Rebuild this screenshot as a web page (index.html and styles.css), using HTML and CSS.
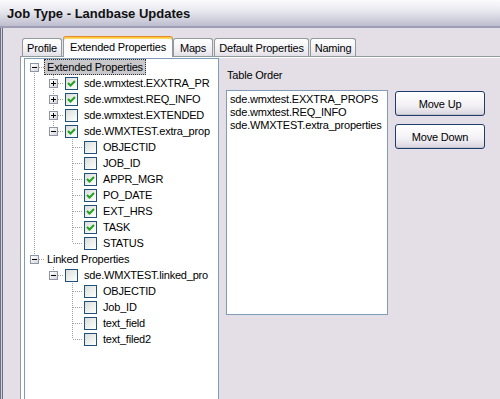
FILE: index.html
```html
<!DOCTYPE html>
<html lang="en">
<head>
    <meta charset="UTF-8">
    <title>Job Type - Landbase Updates</title>
    <link rel="stylesheet" href="styles.css">
</head>
<body>

    <div class="window">
        <div class="titlebar">Job Type - Landbase Updates</div>

        <div class="dialog">
            <div class="tabs">
                <div class="tab tab-profile">Profile</div>
                <div class="tab tab-ext active">Extended Properties</div>
                <div class="tab tab-maps">Maps</div>
                <div class="tab tab-default">Default Properties</div>
                <div class="tab tab-naming">Naming</div>
            </div>

            <div class="panel">
                <!-- tree of tables and fields -->
                <div class="tree">
                    <div class="row">
                        <span class="c rf"><span class="box"></span></span>
                        <span class="lbl sel">Extended Properties</span>
                    </div>
                    <div class="row">
                        <span class="c v"></span>
                        <span class="c t"><span class="box plus"></span></span>
                        <span class="cb on"><svg viewBox="0 0 11 11"><path d="M2 5 L4.5 7.5 L9 3"/></svg></span>
                        <span class="lbl">sde.wmxtest.EXXTRA_PR</span>
                    </div>
                    <div class="row">
                        <span class="c v"></span>
                        <span class="c t"><span class="box plus"></span></span>
                        <span class="cb on"><svg viewBox="0 0 11 11"><path d="M2 5 L4.5 7.5 L9 3"/></svg></span>
                        <span class="lbl">sde.wmxtest.REQ_INFO</span>
                    </div>
                    <div class="row">
                        <span class="c v"></span>
                        <span class="c t"><span class="box plus"></span></span>
                        <span class="cb"></span>
                        <span class="lbl">sde.wmxtest.EXTENDED</span>
                    </div>
                    <div class="row">
                        <span class="c v"></span>
                        <span class="c l"><span class="box"></span></span>
                        <span class="cb on"><svg viewBox="0 0 11 11"><path d="M2 5 L4.5 7.5 L9 3"/></svg></span>
                        <span class="lbl">sde.WMXTEST.extra_prop</span>
                    </div>
                    <div class="row">
                        <span class="c v"></span><span class="c"></span><span class="c t"></span>
                        <span class="cb"></span>
                        <span class="lbl">OBJECTID</span>
                    </div>
                    <div class="row">
                        <span class="c v"></span><span class="c"></span><span class="c t"></span>
                        <span class="cb"></span>
                        <span class="lbl">JOB_ID</span>
                    </div>
                    <div class="row">
                        <span class="c v"></span><span class="c"></span><span class="c t"></span>
                        <span class="cb on"><svg viewBox="0 0 11 11"><path d="M2 5 L4.5 7.5 L9 3"/></svg></span>
                        <span class="lbl">APPR_MGR</span>
                    </div>
                    <div class="row">
                        <span class="c v"></span><span class="c"></span><span class="c t"></span>
                        <span class="cb on"><svg viewBox="0 0 11 11"><path d="M2 5 L4.5 7.5 L9 3"/></svg></span>
                        <span class="lbl">PO_DATE</span>
                    </div>
                    <div class="row">
                        <span class="c v"></span><span class="c"></span><span class="c t"></span>
                        <span class="cb on"><svg viewBox="0 0 11 11"><path d="M2 5 L4.5 7.5 L9 3"/></svg></span>
                        <span class="lbl">EXT_HRS</span>
                    </div>
                    <div class="row">
                        <span class="c v"></span><span class="c"></span><span class="c t"></span>
                        <span class="cb on"><svg viewBox="0 0 11 11"><path d="M2 5 L4.5 7.5 L9 3"/></svg></span>
                        <span class="lbl">TASK</span>
                    </div>
                    <div class="row">
                        <span class="c v"></span><span class="c"></span><span class="c l"></span>
                        <span class="cb"></span>
                        <span class="lbl">STATUS</span>
                    </div>
                    <div class="row">
                        <span class="c rl"><span class="box"></span></span>
                        <span class="lbl root">Linked Properties</span>
                    </div>
                    <div class="row">
                        <span class="c"></span>
                        <span class="c l"><span class="box"></span></span>
                        <span class="cb"></span>
                        <span class="lbl">sde.WMXTEST.linked_pro</span>
                    </div>
                    <div class="row">
                        <span class="c"></span><span class="c"></span><span class="c t"></span>
                        <span class="cb"></span>
                        <span class="lbl">OBJECTID</span>
                    </div>
                    <div class="row">
                        <span class="c"></span><span class="c"></span><span class="c t"></span>
                        <span class="cb"></span>
                        <span class="lbl">Job_ID</span>
                    </div>
                    <div class="row">
                        <span class="c"></span><span class="c"></span><span class="c t"></span>
                        <span class="cb"></span>
                        <span class="lbl">text_field</span>
                    </div>
                    <div class="row">
                        <span class="c"></span><span class="c"></span><span class="c l"></span>
                        <span class="cb"></span>
                        <span class="lbl">text_filed2</span>
                    </div>
                </div>

                <div class="order">
                    <div class="order-label">Table Order</div>
                    <div class="order-body">
                        <div class="listbox">
                            <div>sde.wmxtest.EXXTRA_PROPS</div>
                            <div>sde.wmxtest.REQ_INFO</div>
                            <div>sde.WMXTEST.extra_properties</div>
                        </div>
                        <div class="buttons">
                            <button>Move Up</button>
                            <button>Move Down</button>
                        </div>
                    </div>
                </div>
            </div>
        </div>
    </div>

</body>
</html>
```

FILE: styles.css
```css
body {
    margin: 0;
    font-family: "Liberation Sans", Arial, sans-serif;
    font-size: 11px;
    letter-spacing: -0.2px;
    color: #000;
    background-color: #e4dfe7;
}
.window {
    width: 500px;
    height: 399px;
    overflow: hidden;
    background-color: #e4dfe7;
    box-shadow: inset 1px 0 #6e6e86, inset 2px 0 #d2d0dc, inset 3px 0 #6e6e86;
}
.titlebar {
    height: 26px;
    line-height: 27px;
    padding-left: 7px;
    font-size: 13px;
    font-weight: bold;
    letter-spacing: 0;
    color: #111;
    background: linear-gradient(#fbfbfd, #e6e6ee 45%, #bdbdcf);
    border-bottom: 2px solid #9d9db4;
}
.dialog {
    width: 520px;
    padding-left: 20px;
}

/* tabs */
.tabs {
    display: flex;
    align-items: flex-end;
    height: 20px;
    margin-top: 8px;
    padding-left: 2px;
}
.tab {
    box-sizing: border-box;
    height: 18px;
    line-height: 18px;
    text-align: center;
    margin-right: 1px;
    border: 1px solid #919b9c;
    border-bottom: none;
    border-radius: 3px 3px 0 0;
    background: linear-gradient(#ffffff, #f0eef3 70%, #e2dfe6);
}
.tab-profile { width: 40px; }
.tab-ext     { width: 110px; }
.tab-maps    { width: 40px; }
.tab-default { width: 95px; }
.tab-naming  { width: 46px; }
.tab.active {
    position: relative;
    height: 21px;
    line-height: 20px;
    margin: 0 0 -1px 0;
    border-top: 1px solid #e68b2c;
    box-shadow: inset 0 1px #ffc83c, inset 0 2px #ffd968;
    background: #fcfcfe;
    z-index: 1;
}

/* page under the tabs */
.panel {
    display: flex;
    align-items: flex-start;
    height: 360px;
    padding: 1px 0 0 3px;
    border: 1px solid #919b9c;
    box-shadow: inset 1px 1px #fff;
}
.tree {
    width: 193px;
    height: 360px;
    border: 1px solid #7f9db9;
    background-color: #fff;
    box-shadow: -3px 0 0 #fff;
}
.row {
    display: flex;
    align-items: center;
    height: 16px;
    white-space: nowrap;
}
.c {
    flex: none;
    width: 19px;
    height: 16px;
    --dot-v: repeating-linear-gradient(#a0a0a0 0 1px, transparent 1px 2px);
    --dot-h: repeating-linear-gradient(to right, #a0a0a0 0 1px, transparent 1px 2px);
}
.c.v {
    background: var(--dot-v) 9px 0 / 1px 16px no-repeat;
}
.c.t {
    background: var(--dot-v) 9px 0 / 1px 16px no-repeat, var(--dot-h) 10px 8px / 9px 1px no-repeat;
}
.c.l {
    background: var(--dot-v) 9px 0 / 1px 8px no-repeat, var(--dot-h) 10px 8px / 9px 1px no-repeat;
}
.c.rf {
    background: var(--dot-v) 9px 8px / 1px 8px no-repeat, var(--dot-h) 10px 8px / 9px 1px no-repeat;
}
.c.rl {
    background: var(--dot-v) 9px 0 / 1px 8px no-repeat, var(--dot-h) 10px 8px / 9px 1px no-repeat;
}
.box {
    display: block;
    width: 7px;
    height: 7px;
    margin: 4px 0 0 5px;
    border: 1px solid #8c96a4;
    background:
        linear-gradient(#000, #000) 1px 3px / 5px 1px no-repeat,
        linear-gradient(135deg, #ffffff, #d8d6dc);
}
.box.plus {
    background:
        linear-gradient(#000, #000) 1px 3px / 5px 1px no-repeat,
        linear-gradient(#000, #000) 3px 1px / 1px 5px no-repeat,
        linear-gradient(135deg, #ffffff, #d8d6dc);
}
.cb {
    flex: none;
    width: 11px;
    height: 11px;
    margin-left: 2px;
    border: 1px solid #1c5180;
    background: linear-gradient(135deg, #dcdcd7, #ffffff);
}
.cb svg {
    display: block;
    width: 11px;
    height: 11px;
}
.cb path {
    fill: none;
    stroke: #21a121;
    stroke-width: 2;
}
.lbl {
    margin-left: 3px;
    padding: 0 2px;
    line-height: 14px;
    border: 1px solid transparent;
}
.lbl.sel,
.lbl.root {
    margin-left: 0;
}
.lbl.sel {
    background-color: #c8c8cc;
    border: 1px dotted #333;
}

/* table order */
.order {
    margin-left: 7px;
    padding-top: 11px;
}
.order-label {
    height: 13px;
    line-height: 13px;
    padding-left: 1px;
    margin-bottom: 8px;
}
.order-body {
    display: flex;
    align-items: flex-start;
}
.listbox {
    width: 157px;
    height: 220px;
    padding: 2px 0 1px 3px;
    line-height: 13px;
    border: 1px solid #7f9db9;
    background-color: #fff;
}
.buttons {
    display: flex;
    flex-direction: column;
    gap: 8px;
    margin: 1px 0 0 7px;
}
button {
    width: 90px;
    height: 25px;
    padding: 0;
    font-family: "Liberation Sans", Arial, sans-serif;
    font-size: 11px;
    letter-spacing: -0.2px;
    color: #000;
    border: 1px solid #1e3d6e;
    border-radius: 3px;
    background: linear-gradient(#ffffff, #f2f0f4 60%, #d8d4de);
    box-shadow: inset 0 -1px #c6c2cc;
}
```
